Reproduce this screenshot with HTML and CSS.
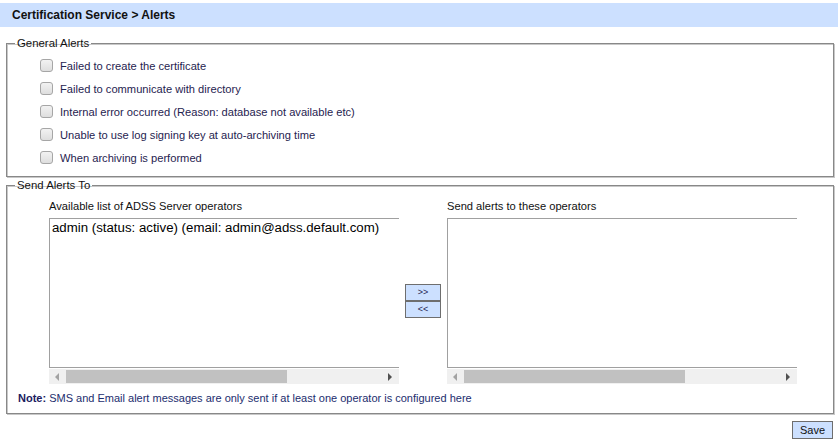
FILE: index.html
```html
<!DOCTYPE html>
<html>
<head>
<meta charset="utf-8">
<link rel="stylesheet" href="styles.css">
</head>
<body>
<div class="header">Certification Service &gt; Alerts</div>

<fieldset class="group general">
  <legend>General Alerts</legend>
  <div class="checks">
    <label class="check"><span class="box"></span><span>Failed to create the certificate</span></label>
    <label class="check"><span class="box"></span><span>Failed to communicate with directory</span></label>
    <label class="check"><span class="box"></span><span>Internal error occurred (Reason: database not available etc)</span></label>
    <label class="check"><span class="box"></span><span>Unable to use log signing key at auto-archiving time</span></label>
    <label class="check"><span class="box"></span><span>When archiving is performed</span></label>
  </div>
</fieldset>

<fieldset class="group send">
  <legend>Send Alerts To</legend>
  <div class="lists">
    <div class="col-label">Available list of ADSS Server operators</div>
    <div></div>
    <div class="col-label">Send alerts to these operators</div>

    <div class="listwrap">
      <div class="listbox">
        <div class="option">admin (status: active) (email: admin@adss.default.com)</div>
      </div>
      <div class="hscroll">
        <span class="arrow left"></span>
        <span class="thumb"></span>
        <span class="arrow right"></span>
      </div>
    </div>
    <div class="movers">
      <button class="btn mover">&gt;&gt;</button>
      <button class="btn mover">&lt;&lt;</button>
    </div>
    <div class="listwrap">
      <div class="listbox"></div>
      <div class="hscroll">
        <span class="arrow left"></span>
        <span class="thumb"></span>
        <span class="arrow right"></span>
      </div>
    </div>
  </div>
  <div class="note"><b>Note:</b> SMS and Email alert messages are only sent if at least one operator is configured here</div>
</fieldset>

<div class="actions"><button class="btn save">Save</button></div>
</body>
</html>
```

FILE: styles.css
```css
html, body {
  margin: 0;
  padding: 0;
  background: #ffffff;
}
body {
  font-family: "Liberation Sans", Arial, sans-serif;
  font-size: 11.15px;
  color: #1f2350;
}
.header {
  margin-top: 3px;
  height: 24px;
  line-height: 24px;
  background: #cce0ff;
  padding-left: 12px;
  font-weight: bold;
  font-size: 12px;
  color: #111;
}
.group {
  margin: 9px 4px 0 6px;
  padding: 0 0 0 8px;
  border: 1px solid #888;
  box-shadow: 1px 1px 0 #c8c8c8, inset 1px 1px 0 #c8c8c8;
}
.group legend {
  padding: 0 2px;
  line-height: 14px;
  font-size: 11.4px;
  color: #111;
}
.general {
  padding-bottom: 7px;
}
.checks {
  display: flex;
  flex-direction: column;
  padding-top: 4px;
}
.check {
  display: flex;
  align-items: center;
  height: 23px;
  margin-left: 25px;
  gap: 7px;
}
.box {
  width: 11px;
  height: 11px;
  border: 1px solid #a6a6a6;
  border-radius: 3px;
  background: linear-gradient(#f2f2f2, #dedede);
}
.send {
  margin-top: 1px;
  padding-bottom: 8px;
}
.lists {
  display: grid;
  grid-template-columns: 350px 48px 350px;
  grid-template-rows: 14px 166px;
  row-gap: 5px;
  margin: 7px 0 0 34px;
}
.col-label {
  line-height: 14px;
  color: #111;
  white-space: nowrap;
}
.listwrap {
  display: flex;
  flex-direction: column;
}
.listbox {
  height: 148px;
  border: 1px solid #a0a0a0;
  border-right: none;
  overflow: hidden;
}
.option {
  font-family: "Liberation Sans", Arial, sans-serif;
  font-size: 13.25px;
  line-height: 15px;
  color: #000;
  padding: 1px 0 0 2px;
  white-space: nowrap;
}
.hscroll {
  margin-top: 1px;
  height: 15px;
  background: #f0f0f0;
  position: relative;
}
.thumb {
  position: absolute;
  left: 17px;
  top: 1px;
  width: 221px;
  height: 13px;
  background: #c1c1c1;
}
.arrow {
  position: absolute;
  top: 4px;
  width: 0;
  height: 0;
  border-top: 4px solid transparent;
  border-bottom: 4px solid transparent;
}
.arrow.left {
  left: 6px;
  border-right: 4px solid #a3a3a3;
}
.arrow.right {
  right: 7px;
  border-left: 4px solid #505050;
}
.movers {
  display: flex;
  flex-direction: column;
  justify-content: center;
  align-items: flex-start;
  padding-left: 6px;
}
.btn {
  font-family: "Liberation Sans", Arial, sans-serif;
  background: #cce0ff;
  border: 1px solid #6e6e6e;
  color: #1f2350;
  padding: 0;
  margin: 0;
}
.mover {
  width: 36px;
  height: 17px;
  font-size: 9px;
  line-height: 15px;
}
.note {
  margin: 7px 0 0 3px;
  line-height: 14px;
  font-size: 11px;
  color: #1c2d6e;
  white-space: nowrap;
}
.note b {
  color: #1a2060;
}
.actions {
  display: flex;
  justify-content: flex-end;
  margin: 7px 5px 0 0;
}
.save {
  width: 41px;
  height: 18px;
  font-size: 11px;
  color: #111;
}
```
